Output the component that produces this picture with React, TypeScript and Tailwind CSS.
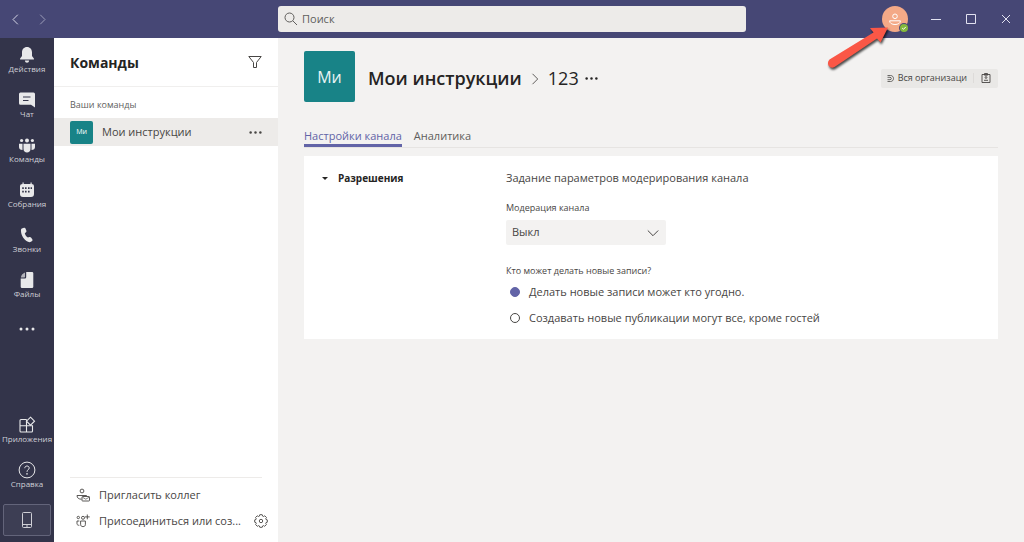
import React from 'react';

interface IconProps {
  className?: string;
}

const BellIcon = () => (
  <svg className="h-[18px] w-[18px]" viewBox="0 0 18 18" fill="currentColor">
    <path d="M9 1C5.900 1 4 3.300 4 6.200V10L2.100 12.600V13.600H15.900V12.600L14 10V6.200C14 3.300 12.100 1 9 1Z" />
    <path d="M6.900 14.600H11.100C11 16 10.100 16.800 9 16.800S7 16 6.900 14.600Z" />
  </svg>
);

const ChatIcon = () => (
  <svg className="h-[18px] w-[18px]" viewBox="0 0 18 18" fill="currentColor">
    <path d="M2.500 1.500H15.500Q17 1.500 17 3V16.500L13 13.700H2.500Q1 13.700 1 12.200V3Q1 1.500 2.500 1.500Z" />
    <path d="M5 6H12.500M5 9.500H10.500" stroke="#33344a" strokeWidth="1.200" />
  </svg>
);

const TeamsIcon = () => (
  <svg className="h-[18px] w-[18px]" viewBox="0 0 18 18" fill="currentColor">
    <circle cx="9" cy="4.500" r="2" />
    <circle cx="3.600" cy="4.500" r="1.600" />
    <circle cx="14.400" cy="4.500" r="1.600" />
    <path d="M5.500 7.800H12.500V13C12.500 15.200 11 16.500 9 16.500S5.500 15.200 5.500 13Z" />
    <path d="M1 7.800H4.500V14C2.300 14 1 12.800 1 11ZM17 7.800H13.500V14C15.700 14 17 12.800 17 11Z" />
  </svg>
);

const CalendarIcon = () => (
  <svg className="h-[18px] w-[18px]" viewBox="0 0 18 18" fill="currentColor">
    <path d="M4.500 1.500H5.700V3H12.500V1.500H13.700V3Q16 3 16 5V13Q16 16 13 16H5Q2 16 2 13V5Q2 3 4.500 3Z" />
    <path
      d="M7 6.200H8.600V8H7ZM10 6.200H11.600V8H10ZM12.600 6.200H14V8H12.600ZM4.200 6.200H5.800V8H4.200ZM4.200 9.800H5.800V11.600H4.200ZM7 9.800H8.600V11.600H7ZM10 9.800H11.600V11.600H10Z"
      fill="#33344a"
    />
  </svg>
);

const PhoneIcon = () => (
  <svg className="h-[18px] w-[18px]" viewBox="0 0 18 18" fill="currentColor">
    <path d="M3.800 2.500L6 1.800C6.700 1.600 7.200 1.900 7.500 2.500L8.400 4.700C8.600 5.300 8.500 5.800 8 6.200L6.800 7.300C7.200 9 8.300 10.600 9.900 11.600L11.500 11.100C12 10.900 12.600 11.100 13 11.600L14.300 13.300C14.700 13.900 14.600 14.500 14.100 15C13 16.200 11.500 16.500 10 15.800C6 13.800 3.300 9.800 3 5.300C2.900 4 3 3 3.800 2.500Z" />
  </svg>
);

const FileIcon = () => (
  <svg className="h-[18px] w-[18px]" viewBox="0 0 18 18" fill="currentColor">
    <path d="M8.200 1H14Q15.300 1 15.300 2.300V15.700Q15.300 17 14 17H4Q2.700 17 2.700 15.700V7.600H6.900Q8.200 7.600 8.200 6.300Z" />
    <path d="M7 1.500V5.700Q7 6.400 6.300 6.400H2.900Q3.200 3.200 7 1.500Z" opacity="0.700" />
  </svg>
);

const MoreIcon = ({ className }: IconProps) => (
  <svg className={className} viewBox="0 0 16 16" fill="currentColor">
    <circle cx="2" cy="8" r="1.500" />
    <circle cx="8" cy="8" r="1.500" />
    <circle cx="14" cy="8" r="1.500" />
  </svg>
);

const AppsIcon = () => (
  <svg className="h-[18px] w-[18px]" viewBox="0 0 18 18" fill="none" stroke="currentColor" strokeWidth="1.100">
    <path d="M8.500 3.500H3Q2 3.500 2 4.500V15Q2 16 3 16H13.500Q14.500 16 14.500 15V9.800H2M8.500 3.500V16" />
    <path d="M12.500 1.200L16.500 5.200L12.500 9.200L8.500 5.200Z" fill="#33344a" />
  </svg>
);

const HelpIcon = () => (
  <svg className="h-[18px] w-[18px]" viewBox="0 0 18 18" fill="none" stroke="currentColor">
    <circle cx="9" cy="9" r="7.900" />
    <path d="M6.800 7.200C6.800 5.800 7.700 5 9 5S11.200 5.800 11.200 7C11.200 8.700 9 8.800 9 10.800" />
    <circle cx="9" cy="12.900" r="0.400" fill="currentColor" />
  </svg>
);

const Chevron = ({ className }: IconProps) => (
  <svg className={className} viewBox="0 0 12 12" fill="none" stroke="currentColor">
    <path d="M3.500 0.800L8.700 6L3.500 11.200" />
  </svg>
);

const railItems = [
  { label: 'Действия', icon: <BellIcon /> },
  { label: 'Чат', icon: <ChatIcon /> },
  { label: 'Команды', icon: <TeamsIcon /> },
  { label: 'Собрания', icon: <CalendarIcon /> },
  { label: 'Звонки', icon: <PhoneIcon /> },
  { label: 'Файлы', icon: <FileIcon /> },
];

const railBottomItems = [
  { label: 'Приложения', icon: <AppsIcon /> },
  { label: 'Справка', icon: <HelpIcon /> },
];

const RailButton: React.FC<{ label: string; icon: React.ReactNode }> = ({ label, icon }) => (
  <button className="flex h-[45px] w-full shrink-0 flex-col items-center pt-2 text-[#e8e8ea]">
    {icon}
    <span className="text-[8px] leading-[10px] whitespace-nowrap text-[#cfcfd6]">{label}</span>
  </button>
);

const TitleBar: React.FC = () => (
  <header className="grid h-[38px] shrink-0 grid-cols-[278px_minmax(0,2fr)_minmax(278px,1fr)] items-center bg-[#464775] text-[#e2e2f0]">
    <div className="flex items-center gap-1 pl-1.5">
      <button aria-label="Назад" className="p-1">
        <Chevron className="h-[11px] w-[11px] rotate-180" />
      </button>
      <button aria-label="Вперед" className="p-1 pl-2 opacity-60">
        <Chevron className="h-[11px] w-[11px]" />
      </button>
    </div>

    <label className="flex h-[26px] items-center gap-1 rounded-[3px] bg-[#edebe9] px-1.5 text-[#605e5c]">
      <svg className="h-[14px] w-[14px]" viewBox="0 0 14 14" fill="none" stroke="currentColor">
        <circle cx="5.500" cy="5.500" r="4.500" />
        <path d="M8.800 8.800L13 13" />
      </svg>
      <input
        type="text"
        aria-label="Поиск"
        placeholder="Поиск"
        className="min-w-0 flex-1 bg-transparent text-[11px] outline-none placeholder:text-[#605e5c]"
      />
    </label>

    <div className="flex items-center justify-end gap-[23px] pr-3">
      <button aria-label="Профиль" className="relative -mr-px">
        <svg className="h-[26px] w-[26px] rounded-full bg-[#f4a987]" viewBox="0 0 26 26" fill="none" stroke="#fff">
          <circle cx="13" cy="10.300" r="2.300" />
          <path d="M7.600 14.800H18.400C18.400 17.300 16 18.500 13 18.500S7.600 17.300 7.600 14.800Z" />
        </svg>
        <svg className="absolute -right-px -bottom-px h-[10px] w-[10px]" viewBox="0 0 10 10">
          <circle cx="5" cy="5" r="5" fill="#464775" />
          <circle cx="5" cy="5" r="4" fill="#84b93c" />
          <path d="M3.200 5.100L4.500 6.300L6.800 3.900" fill="none" stroke="#fff" />
        </svg>
      </button>
      <button aria-label="Свернуть">
        <svg className="h-3 w-3" viewBox="0 0 12 12" stroke="currentColor">
          <path d="M1 6.500H11" />
        </svg>
      </button>
      <button aria-label="Развернуть">
        <svg className="h-3 w-3" viewBox="0 0 12 12" fill="none" stroke="currentColor">
          <path d="M1.500 1.500H10.500V10.500H1.500Z" />
        </svg>
      </button>
      <button aria-label="Закрыть">
        <svg className="h-3 w-3" viewBox="0 0 12 12" stroke="currentColor">
          <path d="M2 2L10 10M10 2L2 10" />
        </svg>
      </button>
    </div>
  </header>
);

const AppRail: React.FC = () => (
  <nav className="flex w-[54px] shrink-0 flex-col bg-[#33344a]">
    {railItems.map((item) => (
      <RailButton key={item.label} label={item.label} icon={item.icon} />
    ))}
    <button aria-label="Другие приложения" className="flex h-[42px] items-center justify-center text-[#e8e8ea]">
      <MoreIcon className="h-4 w-4" />
    </button>
    <div className="mt-auto flex flex-col">
      {railBottomItems.map((item) => (
        <RailButton key={item.label} label={item.label} icon={item.icon} />
      ))}
      <button
        aria-label="Мобильное приложение"
        className="mx-[3px] mt-1.5 mb-1.5 flex h-8 items-center justify-center rounded-[2px] border border-[#63647a] bg-[#3d3e54] text-[#cfcfd6]"
      >
        <svg className="h-[18px] w-3" viewBox="0 0 12 18" fill="none" stroke="currentColor">
          <rect x="1.500" y="1.500" width="9" height="15" rx="1" />
          <path d="M1.500 13.500H10.500M5 15H7" />
        </svg>
      </button>
    </div>
  </nav>
);

const TeamsPanel: React.FC = () => (
  <aside className="flex w-[224px] shrink-0 flex-col bg-white text-[#484644]">
    <div className="flex h-[49px] items-center justify-between border-b border-[#f0efee] px-4">
      <h2 className="text-[14px] font-bold text-[#252423]">Команды</h2>
      <button aria-label="Фильтр">
        <svg className="h-[14px] w-[14px]" viewBox="0 0 14 14" fill="none" stroke="currentColor">
          <path d="M0.800 1.500H13.200L8.500 7.500V12.500H5.500V7.500Z" />
        </svg>
      </button>
    </div>

    <p className="mt-2.5 px-4 text-[9px] leading-4 text-[#605e5c]">Ваши команды</p>

    {/* выбранная команда */}
    <div className="mt-[5px] flex h-7 items-center bg-[#edebe9] px-4">
      <div className="flex h-[23px] w-[23px] items-center justify-center rounded-[2px] bg-[#188387] text-[7px] text-white">Ми</div>
      <span className="ml-[9px] text-[11px]">Мои инструкции</span>
      <button aria-label="Дополнительно" className="ml-auto">
        <MoreIcon className="h-[13px] w-[13px]" />
      </button>
    </div>

    <div className="mx-4 mt-auto border-t border-[#edebe9]" />
    <div className="flex flex-col pt-1 pr-2.5 pb-2 pl-[22px] text-[11px]">
      <button className="flex h-[26px] items-center gap-[9px]">
        <svg className="h-[14px] w-[14px]" viewBox="0 0 14 14" fill="none" stroke="currentColor" strokeWidth="0.900">
          <circle cx="6" cy="3" r="1.900" />
          <path d="M5.500 11.200C2.800 11.200 1 10 1 7.500H10.500V8.300" />
          <rect x="6" y="8.500" width="7.500" height="4.500" rx="0.600" />
          <path d="M6.500 9.300L9.800 11.200L13 9.300" strokeWidth="0.700" />
        </svg>
        Пригласить коллег
      </button>
      <div className="flex h-[26px] items-center justify-between">
        <button className="flex min-w-0 items-center gap-[9px]">
          <svg className="h-[14px] w-[14px] shrink-0" viewBox="0 0 14 14" fill="none" stroke="currentColor" strokeWidth="0.900">
            <circle cx="2.300" cy="3.500" r="1.200" />
            <circle cx="7" cy="3.800" r="1.500" />
            <path d="M4.600 7H9.400V10.300C9.400 12 8.400 12.600 7 12.600S4.600 12 4.600 10.300ZM3.300 7H1V9.800C1 10.800 2 11.300 3.300 11.300M11.300 0.500V5.300M8.900 2.900H13.700" />
          </svg>
          <span className="truncate">Присоединиться или соз...</span>
        </button>
        <button aria-label="Управление командами" className="shrink-0">
          <svg className="h-[14px] w-[14px]" viewBox="0 0 14 14" fill="none" stroke="currentColor" strokeWidth="0.900">
            <path d="M5.800 0.700H8.200L8.700 2.200L9.400 2.500L10.800 1.800L12.500 3.500L11.700 4.800L12 5.500L13.300 5.900V8.200L12 8.600L11.700 9.300L12.400 10.600L10.700 12.300L9.400 11.600L8.700 11.900L8.200 13.300H5.800L5.300 11.900L4.600 11.600L3.300 12.300L1.600 10.600L2.300 9.300L2 8.600L0.700 8.200V5.900L2 5.500L2.300 4.800L1.500 3.500L3.200 1.800L4.600 2.500L5.300 2.200Z" />
            <circle cx="7" cy="7" r="1.700" />
          </svg>
        </button>
      </div>
    </div>
  </aside>
);

const ChannelHeader: React.FC = () => (
  <div className="flex items-center">
    <div className="flex h-[51px] w-[51px] items-center justify-center rounded-[2px] bg-[#188387] text-[16px] text-[#e8f3f3]">Ми</div>
    <div className="ml-[13px] flex items-center pt-1 text-[#252423]">
      <h1 className="flex items-center text-[18px] whitespace-nowrap">
        <span className="font-semibold">Мои инструкции</span>
        <Chevron className="mx-[7px] h-3 w-3 text-[#605e5c]" />
        <span>123</span>
      </h1>
      <button aria-label="Параметры канала" className="ml-1.5">
        <MoreIcon className="h-[13px] w-[13px]" />
      </button>
    </div>
    <div className="mt-[3px] ml-auto flex h-[19px] items-center rounded-[2px] bg-[#e9e8e6] text-[#484644]">
      <button className="flex items-center gap-1 pl-1.5 text-[9px] whitespace-nowrap">
        <svg className="h-[7px] w-[7px]" viewBox="0 0 7 7" fill="none" stroke="currentColor" strokeWidth="0.800">
          <path d="M0.500 0.500H3.500C7.500 0.500 7.500 6.500 3.500 6.500H0.500M0.500 2.300H3C4.800 2.300 4.800 4.700 3 4.700H0.500" />
        </svg>
        Вся организаци
      </button>
      <button aria-label="Сведения" className="ml-1.5 border-l border-[#dddbd9] px-[7px]">
        <svg className="h-[10px] w-[10px]" viewBox="0 0 10 10" fill="none" stroke="currentColor" strokeWidth="0.900">
          <path d="M1 1.500H9V9.500H1ZM3.500 0.500H6.500V2.200H3.500Z" />
          <circle cx="5" cy="4.500" r="0.900" />
          <path d="M3 7.300H7" />
        </svg>
      </button>
    </div>
  </div>
);

const PermissionsCard: React.FC = () => (
  <section className="mt-2 grid grid-cols-[202px_minmax(0,1fr)] bg-white pt-3 pb-2 text-[#484644]">
    <button className="flex h-5 items-center pl-[18px] text-[10px] font-bold text-[#252423]">
      <svg className="mr-[10px] h-[6px] w-[6px]" viewBox="0 0 6 6" fill="currentColor">
        <path d="M0 2H6L3 5Z" />
      </svg>
      Разрешения
    </button>
    <div className="flex flex-col items-start">
      <p className="text-[11px] leading-5">Задание параметров модерирования канала</p>
      <label htmlFor="moderation" className="mt-3 text-[9px] leading-4">
        Модерация канала
      </label>
      <div className="relative mt-1 flex w-40">
        <select
          id="moderation"
          defaultValue="off"
          className="h-[25px] w-full appearance-none rounded-[2px] bg-[#f3f2f1] pl-1.5 text-[11px] outline-none"
        >
          <option value="off">Выкл</option>
          <option value="on">Вкл</option>
        </select>
        <Chevron className="pointer-events-none absolute top-[7px] right-[7px] h-3 w-3 rotate-90" />
      </div>
      <fieldset className="mt-[18px]">
        <legend className="text-[9px] leading-4">Кто может делать новые записи?</legend>
        <label className="flex h-[26px] items-center text-[11px]">
          <input
            type="radio"
            name="posting"
            defaultChecked
            className="mx-1 h-[10px] w-[10px] appearance-none rounded-full border border-[#484644] checked:border-[#6264a7] checked:bg-[#6264a7]"
          />
          <span className="ml-[5px]">Делать новые записи может кто угодно.</span>
        </label>
        <label className="flex h-[26px] items-center text-[11px]">
          <input
            type="radio"
            name="posting"
            className="mx-1 h-[10px] w-[10px] appearance-none rounded-full border border-[#484644] checked:border-[#6264a7] checked:bg-[#6264a7]"
          />
          <span className="ml-[5px]">Создавать новые публикации могут все, кроме гостей</span>
        </label>
      </fieldset>
    </div>
  </section>
);

const App: React.FC = () => {
  return (
    <div className="relative flex h-screen flex-col overflow-hidden bg-[#f3f2f1] font-['Open_Sans','Noto_Sans',sans-serif]">
      <TitleBar />
      <div className="flex min-h-0 flex-1">
        <AppRail />
        <TeamsPanel />
        <main className="min-w-0 flex-1 px-[26px] pt-[13px]">
          <ChannelHeader />
          <div className="mt-[26px] flex gap-3 border-b border-[#e6e4e2] text-[11px] leading-4">
            <button className="border-b-3 border-[#6264a7] text-[#6264a7]">Настройки канала</button>
            <button className="border-b-3 border-transparent text-[#605e5c]">Аналитика</button>
          </div>
          <PermissionsCard />
        </main>
      </div>

      {/* стрелка, указывающая на профиль */}
      <svg className="pointer-events-none absolute top-[22px] right-[132px] h-[52px] w-[68px] drop-shadow-[1px_2px_1px_rgba(0,0,0,0.7)]" viewBox="0 0 68 52">
        <path
          d="M64 5.500L46 6L49.500 10.500L5.500 37.500Q3 40 4.500 43.500Q7 47 10.500 45L53 16.500L56.500 20.500Z"
          fill="#fa5746"
        />
      </svg>
    </div>
  );
};

export default App;
